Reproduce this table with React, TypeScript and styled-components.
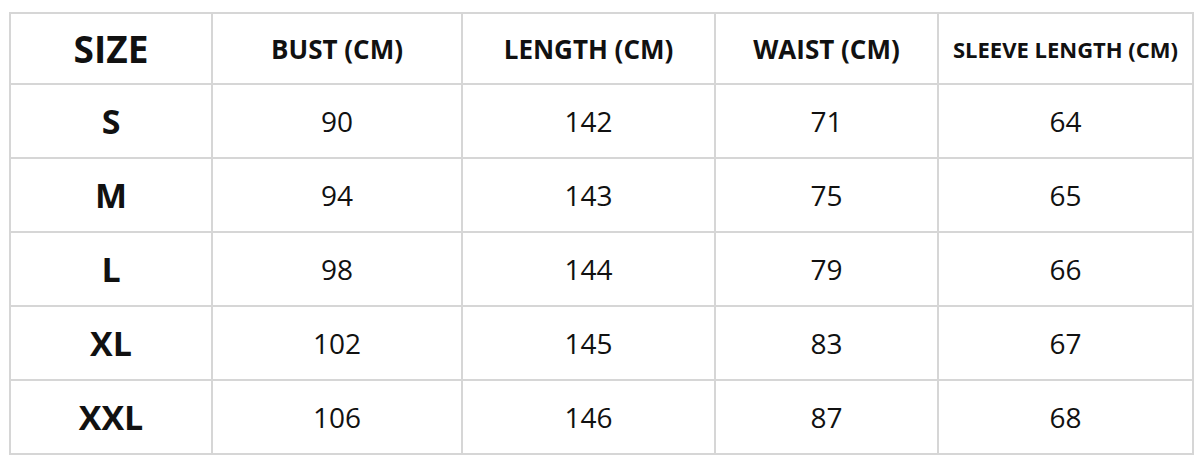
import styled, { createGlobalStyle } from 'styled-components';

const GlobalStyle = createGlobalStyle`
  html, body {
    margin: 0;
    padding: 0;
    background: #fff;
  }
  body {
    font-family: "Open Sans", "Noto Sans", sans-serif;
    color: #111;
  }
`

const Page = styled.div`
  padding: 12px 8px 0 9px;
`

const Table = styled.table`
  width: 1183px;
  border-collapse: collapse;
  table-layout: fixed;
  border: 2px solid #d6d6d6;
`

const HeadCell = styled.th<{ $size: number }>`
  height: 69px;
  padding: 0;
  border: 2px solid #d6d6d6;
  font-size: ${p => p.$size}px;
  font-weight: 700;
  text-align: center;
  vertical-align: middle;
  white-space: nowrap;
`

const SizeCell = styled.td`
  height: 72px;
  padding: 0;
  border: 2px solid #d6d6d6;
  font-size: 34px;
  font-weight: 700;
  text-align: center;
  vertical-align: middle;
`

const ValueCell = styled.td`
  padding: 0;
  border: 2px solid #d6d6d6;
  font-size: 28px;
  font-weight: 400;
  text-align: center;
  vertical-align: middle;
`

const widths = [202, 250, 253, 223, 255]

const headers: [string, number][] = [
  ['SIZE', 37],
  ['BUST (CM)', 26],
  ['LENGTH (CM)', 26],
  ['WAIST (CM)', 26],
  ['SLEEVE LENGTH (CM)', 22],
]

const rows = [
  ['S', '90', '142', '71', '64'],
  ['M', '94', '143', '75', '65'],
  ['L', '98', '144', '79', '66'],
  ['XL', '102', '145', '83', '67'],
  ['XXL', '106', '146', '87', '68'],
]

export default function App() {
  return (
    <>
      <GlobalStyle />
      <Page>
        <Table>
          <colgroup>
            {widths.map((w, i) => <col key={i} style={{ width: w }} />)}
          </colgroup>
          <thead>
            <tr>
              {headers.map(([label, size]) => (
                <HeadCell key={label} $size={size}>{label}</HeadCell>
              ))}
            </tr>
          </thead>
          <tbody>
            {rows.map(row => (
              <tr key={row[0]}>
                <SizeCell>{row[0]}</SizeCell>
                {row.slice(1).map((v, i) => <ValueCell key={i}>{v}</ValueCell>)}
              </tr>
            ))}
          </tbody>
        </Table>
      </Page>
    </>
  );
}
